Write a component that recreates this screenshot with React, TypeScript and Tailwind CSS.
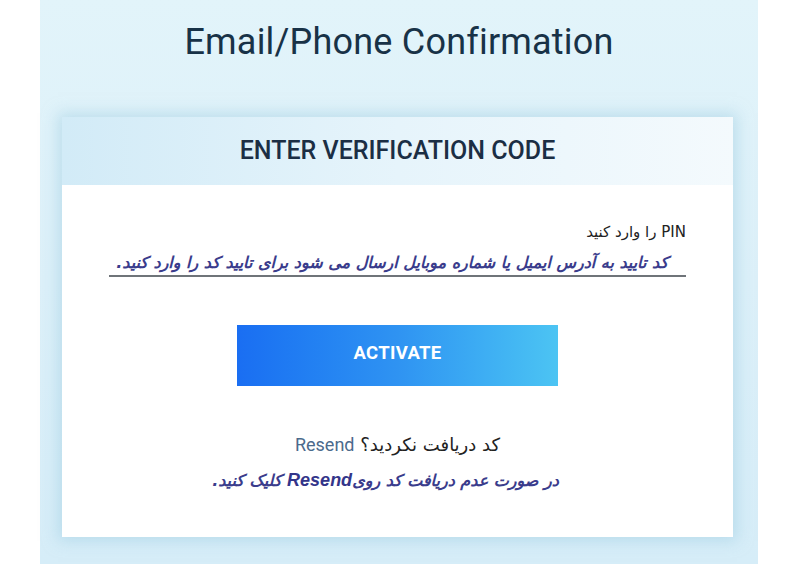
const App = () => {
  return (
    <div className="w-[800px] h-[568px] bg-white overflow-hidden">
      <div className="ml-[40px] w-[718px] h-[564px] bg-gradient-to-b from-[#e2f4fa] via-[#dcf0f9] to-[#d6edf8] flex flex-col items-center">
        <h1 className="pt-[20px] h-[117px] text-[36px] leading-[44px] text-[#183247] font-['Roboto',sans-serif] tracking-[0.2px]">
          Email/Phone Confirmation
        </h1>
        <div className="mr-[3px] w-[671px] h-[420px] bg-white shadow-[0_0_14px_4px_rgba(160,205,225,0.55)] flex flex-col">
          <div className="h-[68px] bg-gradient-to-r from-[#d2ebf7] via-[#e6f4fb] to-[#f4fafd] flex items-center justify-center">
            <h2 className="text-[25px] font-medium text-[#1b2e44] font-['Roboto',sans-serif]">
              ENTER VERIFICATION CODE
            </h2>
          </div>
          <div className="flex-1 flex flex-col px-[47px] pt-[37px]">
            <div dir="rtl" className="text-[15px] leading-[20px] text-[#222] font-['DejaVu_Sans',sans-serif]">
              PIN را وارد کنید
            </div>
            <div dir="rtl" className="mt-[9px] h-[26px] border-b-2 border-[#6f7479] text-[16px] leading-[24px] italic font-bold text-[#3a3c8c] font-['DejaVu_Sans',sans-serif] pr-[18px]">
              کد تایید به آدرس ایمیل یا شماره موبایل ارسال می شود برای تایید کد را وارد کنید.
            </div>
            <div className="flex justify-center mt-[48px]">
              <button className="w-[321px] h-[61px] pb-[3px] bg-gradient-to-r from-[#1a6ef2] via-[#2f93f2] to-[#4cc4f3] text-white text-[18.5px] font-bold font-['Roboto',sans-serif] tracking-[0.3px]">
                ACTIVATE
              </button>
            </div>
            <div dir="rtl" className="mt-[47px] text-center text-[18px] leading-[24px] text-[#222] font-['DejaVu_Sans',sans-serif]">
              کد دریافت نکردید؟{" "}
              <span className="text-[#4b6a8c] font-['Roboto',sans-serif]">Resend</span>
            </div>
            <div dir="rtl" className="mt-[11px] pr-[24px] text-center text-[16px] leading-[24px] italic font-bold text-[#3a3c8c] font-['DejaVu_Sans',sans-serif]">
              در صورت عدم دریافت کد روی
              <span className="text-[#33358a] text-[18px] font-extrabold font-['Liberation_Sans',sans-serif]">Resend</span> کلیک کنید.
            </div>
          </div>
        </div>
      </div>
    </div>
  );
};

export default App;
